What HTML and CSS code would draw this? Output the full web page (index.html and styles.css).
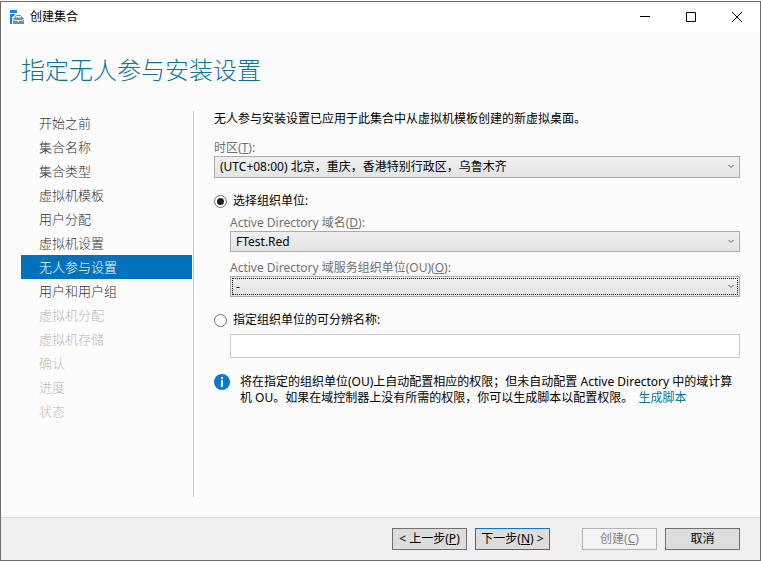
FILE: index.html
```html
<!DOCTYPE html>
<html lang="zh-CN">
<head>
    <meta charset="UTF-8">
    <meta name="viewport" content="width=device-width, initial-scale=1.0">
    <title>创建集合</title>
    <link rel="stylesheet" href="styles.css">
</head>
<body>
    <div class="window">
        <div class="titlebar">
            <svg class="app-icon" width="16" height="16" viewBox="0 0 16 16">
                <path fill="#1a86d9" d="M0 1h7v3H0zM0 5h5v1L3 7.500 2 9v6H0z"></path>
                <path fill="#6f8ea8" d="M3 9.500L4 8.500h9l1 1V15H3z"></path>
                <path fill="none" stroke="#6f8ea8" d="M5.500 9V7.500l1-1h4l1 1V9"></path>
                <path fill="none" stroke="#e6edf2" d="M3 10.500l2 1h7l2-1M8.500 11v2"></path>
            </svg>
            <span class="caption">创建集合</span>
            <div class="window-controls">
                <button type="button" aria-label="最小化">
                    <svg width="10" height="10" viewBox="0 0 10 10"><path d="M0 4.500h10"></path></svg>
                </button>
                <button type="button" aria-label="最大化">
                    <svg width="10" height="10" viewBox="0 0 10 10"><path d="M.5.500h9v9h-9z"></path></svg>
                </button>
                <button type="button" aria-label="关闭">
                    <svg width="10" height="10" viewBox="0 0 10 10"><path d="M0 0l10 10M10 0L0 10"></path></svg>
                </button>
            </div>
        </div>

        <h1>指定无人参与安装设置</h1>

        <div class="content">
            <ul class="steps">
                <li>开始之前</li>
                <li>集合名称</li>
                <li>集合类型</li>
                <li>虚拟机模板</li>
                <li>用户分配</li>
                <li>虚拟机设置</li>
                <li class="active">无人参与设置</li>
                <li>用户和用户组</li>
                <li class="disabled">虚拟机分配</li>
                <li class="disabled">虚拟机存储</li>
                <li class="disabled">确认</li>
                <li class="disabled">进度</li>
                <li class="disabled">状态</li>
            </ul>

            <form class="settings" id="settings">
                <p class="intro">无人参与安装设置已应用于此集合中从虚拟机模板创建的新虚拟桌面。</p>

                <label class="field-label" for="timezone">时区(<u>T</u>):</label>
                <div class="select-box">
                    <select id="timezone" class="tall">
                        <option>(UTC+08:00) 北京，重庆，香港特别行政区，乌鲁木齐</option>
                    </select>
                    <svg width="6" height="5" viewBox="0 0 6 5"><path d="M.5 1L3 3.500 5.500 1"></path></svg>
                </div>

                <div class="radio-row">
                    <input type="radio" name="ou-mode" id="pick-ou" checked>
                    <label for="pick-ou">选择组织单位:</label>
                </div>
                <div class="indent">
                    <label class="field-label" for="domain">Active Directory 域名(<u>D</u>):</label>
                    <div class="select-box">
                        <select id="domain">
                            <option>FTest.Red</option>
                        </select>
                        <svg width="6" height="5" viewBox="0 0 6 5"><path d="M.5 1L3 3.500 5.500 1"></path></svg>
                    </div>
                    <label class="field-label" for="ou">Active Directory 域服务组织单位(OU)(<u>O</u>):</label>
                    <div class="select-box">
                        <select id="ou" class="focused">
                            <option>-</option>
                        </select>
                        <svg width="6" height="5" viewBox="0 0 6 5"><path d="M.5 1L3 3.500 5.500 1"></path></svg>
                    </div>
                </div>

                <div class="radio-row">
                    <input type="radio" name="ou-mode" id="type-dn">
                    <label for="type-dn">指定组织单位的可分辨名称:</label>
                </div>
                <div class="indent">
                    <input type="text" class="dn" aria-label="可分辨名称">
                </div>

                <div class="note">
                    <svg width="16" height="16" viewBox="0 0 16 16">
                        <circle cx="8" cy="8" r="8" fill="#0a78d0"></circle>
                        <path fill="#fff" d="M7 3h2v2H7zM7 6h2v7H7z"></path>
                    </svg>
                    <p>将在指定的组织单位(OU)上自动配置相应的权限；但未自动配置 Active Directory 中的域计算机 OU。如果在域控制器上没有所需的权限，你可以生成脚本以配置权限。 <a href="#">生成脚本</a></p>
                </div>
            </form>
        </div>

        <div class="footer">
            <button type="button" class="btn">&lt; 上一步(<u>P</u>)</button>
            <button type="button" class="btn default">下一步(<u>N</u>) &gt;</button>
            <button type="submit" form="settings" class="btn create" disabled>创建(<u>C</u>)</button>
            <button type="button" class="btn">取消</button>
        </div>
    </div>
</body>
</html>
```

FILE: styles.css
```css
* {
    box-sizing: border-box;
    margin: 0;
    padding: 0;
}

body {
    display: flex;
    min-height: 100vh;
    padding-top: 1px;
    background-color: #fff;
    color: #000;
    font: 12px/16px "Noto Sans", "Noto Sans CJK SC", sans-serif;
}

button, select, input {
    font: inherit;
    color: inherit;
}

.window {
    flex: 1;
    display: flex;
    flex-direction: column;
    border: 1px solid #6b6b6b;
    background-color: #fcfcfc;
}

/* Title bar */
.titlebar {
    display: flex;
    align-items: center;
    height: 30px;
    padding-left: 9px;
    background-color: #fff;
}

.caption {
    flex: 1;
    margin-left: 4px;
}

.window-controls {
    display: flex;
}

.window-controls button {
    display: flex;
    align-items: center;
    justify-content: center;
    width: 46px;
    height: 28px;
    border: none;
    background: none;
}

.window-controls path {
    fill: none;
    stroke: #000;
}

h1 {
    padding: 22px 20px;
    color: #0a7398;
    font-size: 24px;
    line-height: 32px;
    font-weight: 300;
}

.content {
    flex: 1;
    display: flex;
    padding: 3px 20px 20px;
}

/* Wizard steps */
.steps {
    width: 173px;
    padding-right: 1px;
    border-right: 1px solid #c8c8c8;
    list-style: none;
    font-size: 13px;
    line-height: 24px;
    font-weight: 300;
    color: #333;
}

.steps li {
    padding-left: 18px;
}

.steps .active {
    background-color: #0072bc;
    color: #fff;
}

.steps .disabled {
    color: #bbb;
}

/* Settings form */
.settings {
    flex: 1;
    padding-left: 20px;
}

.intro {
    margin-bottom: 13px;
}

.field-label {
    display: block;
    color: #707070;
}

.select-box {
    position: relative;
}

.select-box select {
    display: block;
    width: 100%;
    height: 21px;
    padding: 0 20px 0 5px;
    appearance: none;
    border: 1px solid #acacac;
    border-radius: 0;
    background: linear-gradient(#f0f0f0, #e4e4e4);
}

.select-box select.tall {
    height: 22px;
}

.select-box select.focused {
    outline: 1px dotted #000;
    outline-offset: -3px;
}

.select-box svg {
    position: absolute;
    top: 8px;
    right: 6px;
    pointer-events: none;
}

.select-box path {
    fill: none;
    stroke: #606060;
}

.radio-row {
    display: flex;
    align-items: center;
    gap: 6px;
    margin-top: 15px;
}

.radio-row input {
    display: flex;
    width: 13px;
    height: 13px;
    padding: 2px;
    appearance: none;
    border: 1px solid #707070;
    border-radius: 50%;
    background-color: #fff;
}

.radio-row input:checked::before {
    content: "";
    flex: 1;
    border-radius: 50%;
    background-color: #212121;
}

.indent {
    padding: 6px 0 0 16px;
}

.indent .select-box + .field-label {
    margin-top: 8px;
}

.dn {
    display: block;
    width: 100%;
    height: 24px;
    padding: 0 4px;
    border: 1px solid #ccc;
    background-color: #fff;
}

.note {
    display: flex;
    gap: 10px;
    margin-top: 16px;
}

.note svg {
    flex-shrink: 0;
}

.note p {
    flex: 1;
}

.note a {
    display: inline-block;
    margin-left: 2px;
    color: #0a7398;
    text-decoration: none;
}

/* Button bar */
.footer {
    display: flex;
    justify-content: flex-end;
    gap: 8px;
    padding: 10px 20px;
    border-top: 1px solid #d9d9d9;
    background-color: #f0f0f0;
}

.btn {
    width: 75px;
    height: 22px;
    border: 1px solid #707070;
    background-color: #ddd;
    line-height: 20px;
    white-space: nowrap;
}

.btn.default {
    border-color: #0078d7;
}

.btn.create {
    margin-left: 24px;
}

.btn:disabled {
    border-color: #adb2b5;
    background-color: #f4f4f4;
    color: #838383;
}
```
